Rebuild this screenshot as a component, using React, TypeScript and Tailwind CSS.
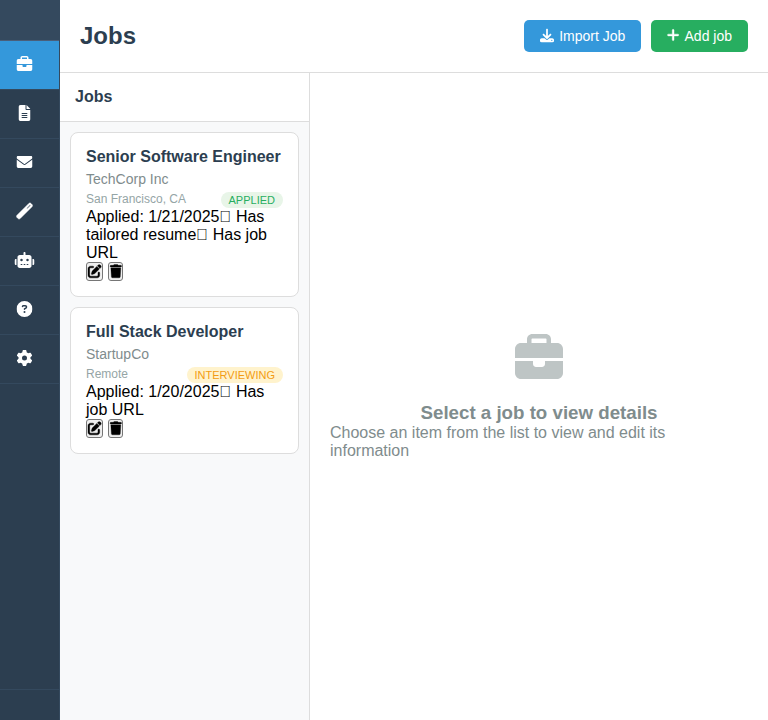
import type { ReactNode } from "react";
import {
  FaBriefcase,
  FaFileLines,
  FaEnvelope,
  FaWandMagic,
  FaRobot,
  FaCircleQuestion,
  FaGear,
  FaDownload,
  FaPlus,
  FaPenToSquare,
  FaTrash,
} from "react-icons/fa6";

const navItems: { label: string; icon: ReactNode; active?: boolean }[] = [
  { label: "Jobs", icon: <FaBriefcase className="size-4 -translate-x-[0.5px]" />, active: true },
  { label: "Resumes", icon: <FaFileLines className="h-4 w-3 -translate-x-[0.5px]" /> },
  { label: "Cover letters", icon: <FaEnvelope className="size-4 -translate-x-[0.5px]" /> },
  { label: "Tailor", icon: <FaWandMagic className="size-4 -translate-x-[0.5px] overflow-visible stroke-[16]" /> },
  { label: "Assistant", icon: <FaRobot className="h-4 w-5 -translate-x-[0.5px]" /> },
  { label: "Help", icon: <FaCircleQuestion className="size-4 -translate-x-[0.5px]" /> },
  { label: "Settings", icon: <FaGear className="size-4 -translate-x-[0.5px]" /> },
];

type Job = {
  title: string;
  company: string;
  location: string;
  status: string;
  badge: string;
  summary: string;
};

const jobs: Job[] = [
  {
    title: "Senior Software Engineer",
    company: "TechCorp Inc",
    location: "San Francisco, CA",
    status: "APPLIED",
    badge: "bg-[#e8f5e8] text-[#27ae60]",
    summary: "Applied: 1/21/2025\uE900 Has tailored resume\uE900 Has job URL",
  },
  {
    title: "Full Stack Developer",
    company: "StartupCo",
    location: "Remote",
    status: "INTERVIEWING",
    badge: "bg-[#fff3cd] text-[#f39c12]",
    summary: "Applied: 1/20/2025\uE900 Has job URL",
  },
];

function Sidebar() {
  return (
    <aside className="flex w-[60px] shrink-0 flex-col border-r border-[#34495e] bg-[#2c3e50] text-white">
      <div className="h-[41px] shrink-0 border-b border-[#4a5f7a] bg-[#34495e]" />
      <nav className="flex-1">
        {navItems.map((item) => (
          <a
            key={item.label}
            aria-label={item.label}
            className={`flex h-[49px] items-center border-b border-[#34495e] pl-[15px] ${item.active ? "bg-[#3498db]" : ""}`}
          >
            <span className="flex w-5 justify-center pb-0.5">{item.icon}</span>
          </a>
        ))}
      </nav>
      <div className="h-[31px] shrink-0 border-t border-[#34495e]" />
    </aside>
  );
}

function JobCard({ job }: { job: Job }) {
  return (
    <article className="rounded-lg border border-[#dddddd] bg-white p-[15px]">
      <h3 className="mb-[5px] text-base leading-[18px] font-bold whitespace-nowrap text-[#2c3e50]">{job.title}</h3>
      <p className="mb-[5px] text-sm leading-4 text-[#7f8c8d]">{job.company}</p>
      <div className="flex h-4 justify-between">
        <span className="text-xs leading-[14px] text-[#95a5a6]">{job.location}</span>
        <span className={`h-4 rounded-xl px-2 text-[11px] leading-4 ${job.badge}`}>{job.status}</span>
      </div>
      <p className="text-base leading-[18px] text-black">{job.summary}</p>
      <div className="flex gap-[5px]">
        <button aria-label="Edit" className="flex h-[19px] w-[17px] items-center justify-center rounded-[3px] border border-[#767676] bg-[#efefef] text-black">
          <FaPenToSquare className="size-[13.33px] shrink-0 -translate-y-[0.5px] overflow-visible stroke-[16]" />
        </button>
        <button aria-label="Delete" className="flex h-[19px] w-[15px] items-center justify-center rounded-[3px] border border-[#767676] bg-[#efefef] text-black">
          <FaTrash className="h-[13.33px] w-[11.67px] shrink-0 -translate-y-[0.5px] overflow-visible stroke-[12]" />
        </button>
      </div>
    </article>
  );
}

export default function App() {
  return (
    <div className="flex h-screen overflow-hidden bg-white font-['Liberation_Sans',Arial,sans-serif]">
      <Sidebar />
      <div className="flex min-w-0 flex-1 flex-col">
        <header className="flex h-[73px] shrink-0 items-center justify-between border-b border-[#dddddd] px-5">
          <h1 className="text-2xl leading-7 font-bold text-[#2c3e50]">Jobs</h1>
          <div className="flex gap-2.5">
            <button className="flex h-8 items-center gap-[5px] rounded-[5px] bg-[#3498db] px-4 text-sm leading-4 text-white">
              <FaDownload className="size-3.5 -translate-y-[0.5px]" />
              Import Job
            </button>
            <button className="flex h-8 items-center gap-[5px] rounded-[5px] bg-[#27ae60] px-4 text-sm leading-4 text-white">
              <FaPlus className="h-3.5 w-[12.25px] -translate-y-px overflow-visible stroke-[16]" />
              Add job
            </button>
          </div>
        </header>
        <div className="flex min-h-0 flex-1">
          <section className="flex w-[250px] shrink-0 flex-col border-r border-[#dddddd] bg-[#f8f9fa]">
            <div className="flex h-[49px] items-center border-b border-[#dddddd] bg-white px-[15px]">
              <h2 className="text-base leading-[18px] font-bold text-[#2c3e50]">Jobs</h2>
            </div>
            <div className="flex flex-col gap-2.5 p-2.5">
              {jobs.map((job) => (
                <JobCard key={job.title} job={job} />
              ))}
            </div>
          </section>
          <main className="flex flex-1 flex-col items-center justify-center px-5 pt-[21px] pb-5 text-[#7f8c8d]">
            <FaBriefcase className="mb-5 size-12 opacity-50" />
            <h3 className="mb-px text-[18.72px] leading-[21px] font-bold">Select a job to view details</h3>
            <p className="text-base leading-[18px]">Choose an item from the list to view and edit its information</p>
          </main>
        </div>
      </div>
    </div>
  );
}
